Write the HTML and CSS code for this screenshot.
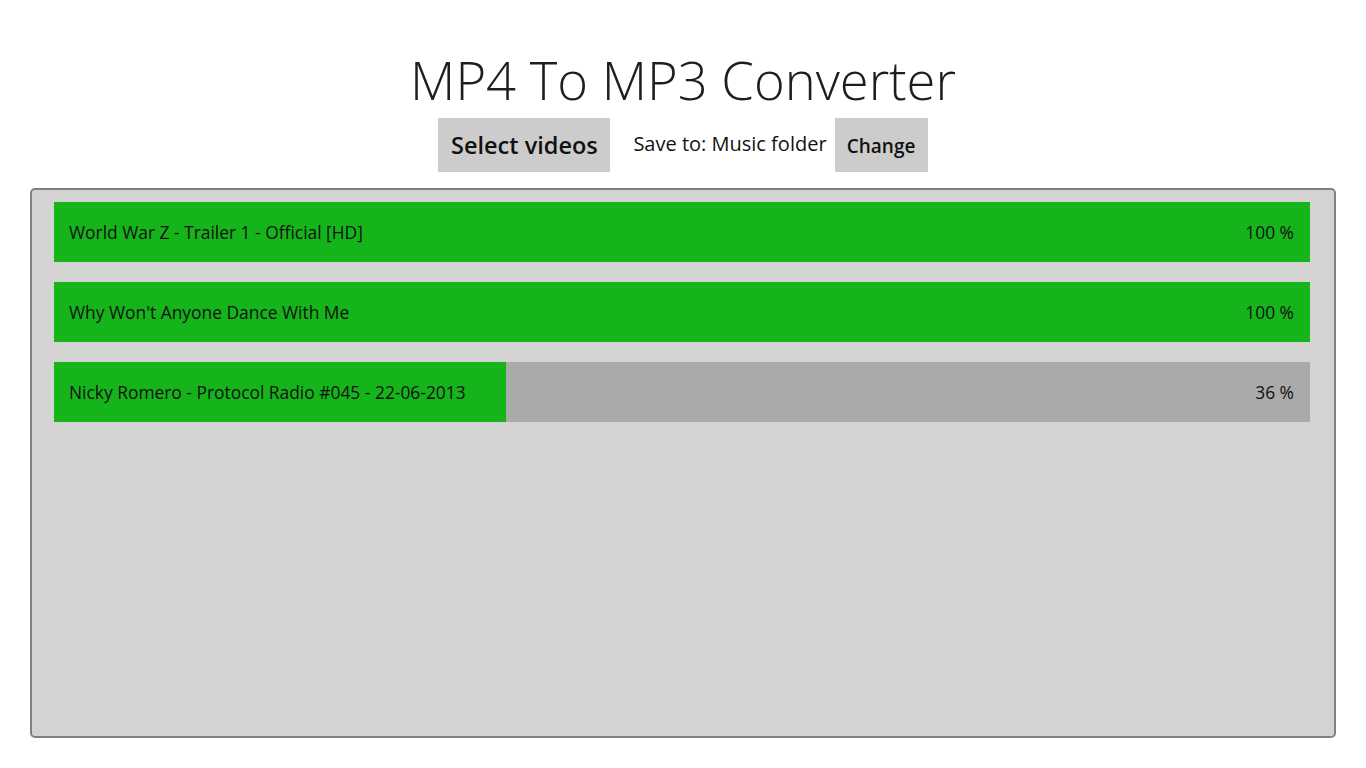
FILE: index.html
```html
<!DOCTYPE html>
<html lang="en">
<head>
<meta charset="utf-8">
<title>MP4 To MP3 Converter</title>
<link rel="stylesheet" href="styles.css">
</head>
<body>
<header class="header">
  <h1 class="title">MP4 To MP3 Converter</h1>
  <div class="toolbar">
    <button class="btn btn-select">Select videos</button>
    <span class="save-label">Save to: Music folder</span>
    <button class="btn btn-change">Change</button>
  </div>
</header>
<main class="panel">
  <div class="item">
    <div class="fill" style="width:100%"></div>
    <span class="name">World War Z - Trailer 1 - Official [HD]</span>
    <span class="pct">100 %</span>
  </div>
  <div class="item">
    <div class="fill" style="width:100%"></div>
    <span class="name">Why Won't Anyone Dance With Me</span>
    <span class="pct">100 %</span>
  </div>
  <div class="item">
    <div class="fill" style="width:36%"></div>
    <span class="name">Nicky Romero - Protocol Radio #045 - 22-06-2013</span>
    <span class="pct">36 %</span>
  </div>
</main>
</body>
</html>
```

FILE: styles.css
```css
* { box-sizing: border-box; }

html, body {
  margin: 0;
  padding: 0;
  background: #ffffff;
  height: 100%;
}

body {
  font-family: "Open Sans", "Noto Sans", "Liberation Sans", sans-serif;
  color: #111111;
  display: flex;
  flex-direction: column;
}

.header {
  display: flex;
  flex-direction: column;
  align-items: center;
}

.title {
  margin: 44px 0 0 0;
  height: 74px;
  line-height: 72px;
  font-size: 52.5px;
  font-weight: 300;
  color: #1e1e1e;
  letter-spacing: 0;
}

.toolbar {
  display: flex;
  align-items: center;
  height: 54px;
}

.btn {
  font-family: inherit;
  height: 54px;
  border: none;
  background: #cccccc;
  color: #111111;
  font-weight: 600;
  padding: 0;
  cursor: pointer;
}

.btn-select {
  width: 172px;
  font-size: 23.5px;
}

.btn-change {
  width: 93px;
  font-size: 19px;
  padding-top: 2px;
}

.save-label {
  margin: 0 8px 0 23px;
  font-size: 20px;
  padding-bottom: 4px;
}

.panel {
  margin: 16px 30px 30px 30px;
  height: 550px;
  background: #d3d3d3;
  border: 2px solid #808080;
  border-radius: 5px;
  padding: 12px 24px 0 22px;
  display: flex;
  flex-direction: column;
  gap: 20px;
}

.item {
  position: relative;
  height: 60px;
  background: #aaaaaa;
  display: flex;
  align-items: center;
  justify-content: space-between;
  padding: 0 16px 0 15px;
  font-size: 17.4px;
}

.fill {
  position: absolute;
  left: 0;
  top: 0;
  bottom: 0;
  background: #16b41b;
}

.name, .pct {
  position: relative;
  color: #111111;
}
```
